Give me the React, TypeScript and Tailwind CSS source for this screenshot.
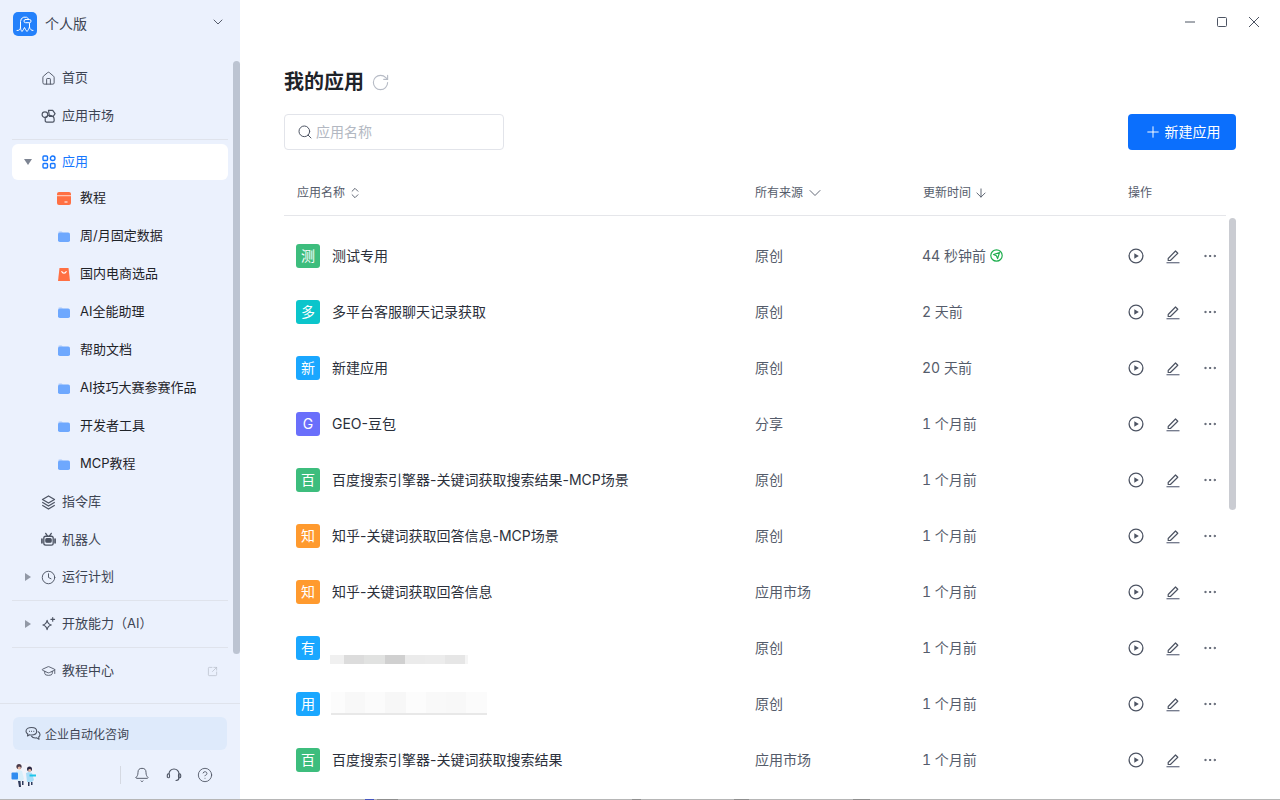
import type { ReactNode } from "react"
import {
  ArrowDown,
  Bell,
  ChevronDown,
  ChevronsUpDown,
  CircleHelp,
  Clock,
  Ellipsis,
  GraduationCap,
  House,
  Plus,
  RotateCw,
  Search,
  SquareArrowOutUpRight,
} from "lucide-react"

type Row = {
  badge: string
  color: string
  name?: string
  source: string
  time: string
  blur?: "a" | "b"
  live?: boolean
}

const ROWS: Row[] = [
  { badge: "测", color: "bg-[#3dbd7d]", name: "测试专用", source: "原创", time: "44 秒钟前", live: true },
  { badge: "多", color: "bg-[#0bc5cb]", name: "多平台客服聊天记录获取", source: "原创", time: "2 天前" },
  { badge: "新", color: "bg-[#1aa7ff]", name: "新建应用", source: "原创", time: "20 天前" },
  { badge: "G", color: "bg-[#6a6ffb]", name: "GEO-豆包", source: "分享", time: "1 个月前" },
  { badge: "百", color: "bg-[#3dbd7d]", name: "百度搜索引擎器-关键词获取搜索结果-MCP场景", source: "原创", time: "1 个月前" },
  { badge: "知", color: "bg-[#ff9a2e]", name: "知乎-关键词获取回答信息-MCP场景", source: "原创", time: "1 个月前" },
  { badge: "知", color: "bg-[#ff9a2e]", name: "知乎-关键词获取回答信息", source: "应用市场", time: "1 个月前" },
  { badge: "有", color: "bg-[#1aa7ff]", blur: "a", source: "原创", time: "1 个月前" },
  { badge: "用", color: "bg-[#1aa7ff]", blur: "b", source: "原创", time: "1 个月前" },
  { badge: "百", color: "bg-[#3dbd7d]", name: "百度搜索引擎器-关键词获取搜索结果", source: "应用市场", time: "1 个月前" },
]

const FOLDERS = ["周/月固定数据", "国内电商选品", "AI全能助理", "帮助文档", "AI技巧大赛参赛作品", "开发者工具", "MCP教程"]

function Logo() {
  return (
    <div className="flex h-6 w-6 items-center justify-center rounded-[5px] bg-[#2481fb]">
      <svg viewBox="0 0 24 24" className="h-6 w-6" fill="none" stroke="#fff" strokeWidth="1" strokeLinecap="round" strokeLinejoin="round">
        <path d="M7.500 15V9.500a4.500 4.500 0 0 1 8.300-2.400" />
        <path d="M16.500 11.500V15" />
        <rect x="11" y="7.500" width="7" height="3.200" rx="1.500" />
        <path d="M4 18.500c2 .3 3.500-1 3.500-3.500 0 2 .5 3.500 1.500 4.500 1-1 1.800-2.500 2.500-4 .6 1.500 1.400 3 2.500 4 1-1 1.700-2.500 2.500-4.500 .2 2 2 3.800 3.500 3.500" />
      </svg>
    </div>
  )
}

function MarketIcon() {
  return (
    <svg viewBox="0 0 16 16" className="h-[15px] w-[15px]" fill="none" stroke="#4d5463" strokeWidth="1.300" strokeLinejoin="round">
      <circle cx="4.200" cy="6" r="3" />
      <path d="M8 1.500h4.500L15 5l-2 3H9z" />
      <path d="M4.500 9.300c1.500-1.800 3-2.800 5-2.600 2.500.2 4.500 1.800 4.500 4.100v1.700c0 .8-.6 1.500-1.500 1.500H6c-1 0-1.500-.7-1.500-1.500z" />
    </svg>
  )
}

function AppsIcon() {
  return (
    <svg viewBox="0 0 14 14" className="h-[14px] w-[14px]" fill="none" stroke="#1677ff" strokeWidth="1.400">
      <rect x="1" y="1" width="4.500" height="4.500" rx="1" />
      <circle cx="10.700" cy="3.250" r="2.300" />
      <rect x="1" y="8.500" width="4.500" height="4.500" rx="1" />
      <rect x="8.500" y="8.500" width="4.500" height="4.500" rx="1" />
    </svg>
  )
}

function LayersIcon() {
  return (
    <svg viewBox="0 0 15 15" className="h-[15px] w-[15px]" fill="none" stroke="#4d5463" strokeWidth="1.300" strokeLinecap="round" strokeLinejoin="round">
      <path d="M7.500 1 13.500 4.500 7.500 8 1.500 4.500z" />
      <path d="M1.700 7.500 7.500 11l5.800-3.500" />
      <path d="M1.700 10.500 7.500 14l5.800-3.500" />
    </svg>
  )
}

function RobotIcon() {
  return (
    <svg viewBox="0 0 16 15" className="h-[15px] w-4" fill="none" stroke="#4d5463" strokeWidth="1.400" strokeLinecap="round">
      <path d="M5 1l2 3M11 1 9 4" />
      <rect x="3" y="4" width="10" height="9.500" rx="2" />
      <rect x="5.200" y="6.500" width="5.600" height="3.800" rx="1" fill="#4d5463" />
      <path d="M1 7v4M15 7v4" strokeWidth="1.800" />
    </svg>
  )
}

function SparkleIcon() {
  return (
    <svg viewBox="0 0 16 16" className="h-4 w-4" fill="none" stroke="#4d5463" strokeWidth="1.200" strokeLinejoin="round">
      <path d="M6.500 4c.5 3 1.500 4.300 4.500 5-3 .7-4 2-4.500 5-.5-3-1.500-4.300-4.500-5 3-.7 4-2 4.500-5z" />
      <path d="M12.500 1v4M10.500 3h4" strokeLinecap="round" />
    </svg>
  )
}

function ChatIcon() {
  return (
    <svg viewBox="0 0 16 16" className="h-4 w-4" fill="none" stroke="#4d5463" strokeWidth="1.100" strokeLinejoin="round">
      <path d="M6.500 1.500c3 0 5.200 1.500 5.200 3.800S9.500 9 6.500 9c-.7 0-1.400 0-2-.2L2.500 10l.3-2C1.800 7.300 1 6.400 1 5.300 1 3 3.500 1.500 6.500 1.500z" />
      <path d="M12.800 5.500c1.300.6 2.200 1.700 2.200 3 0 1-.5 1.900-1.300 2.500l.3 2.200-2.200-1.300c-2.200.4-4.500-.3-5.500-2" />
      <path d="M4 5.300h.8M6.200 5.300H7M8.400 5.300h.8" strokeWidth="1.200" />
    </svg>
  )
}

function FolderIcon() {
  return (
    <svg viewBox="0 0 12 11" className="h-[11px] w-3">
      <path d="M0 2a2 2 0 0 1 2-2h1.500l1.500 2H0z" fill="#c9dcfd" />
      <rect x="0" y="1.500" width="12" height="9.500" rx="1.800" fill="#6ea8fe" />
    </svg>
  )
}

function CardIcon() {
  return (
    <svg viewBox="0 0 14 13" className="h-[13px] w-[14px]">
      <rect width="14" height="13" rx="2" fill="#ff7043" />
      <rect y="3.200" width="14" height="1" fill="#ffd9cc" />
      <rect x="7.500" y="9.500" width="3" height="1" fill="#fff" />
    </svg>
  )
}

function BagIcon() {
  return (
    <svg viewBox="0 0 12 13" className="h-[13px] w-3">
      <path d="M1.500 0h9L12 13H0z" fill="#ff7043" />
      <path d="M3.800 3.500a2.300 2.300 0 0 0 4.400 0" fill="none" stroke="#fff" strokeWidth="1.100" strokeLinecap="round" />
    </svg>
  )
}

function Avatar() {
  return (
    <svg viewBox="0 0 26 26" className="h-[26px] w-[26px]">
      <circle cx="13" cy="13" r="12.500" fill="#f1f3fb" />
      <path d="M5 9l3-1 3 1 2 8-2 2H6z" fill="#d8eefa" />
      <path d="M15 11l3-1 3 1 2 7-2 2h-5z" fill="#a9dcf7" />
      <circle cx="8" cy="4.500" r="2.600" fill="#4a3a4a" />
      <circle cx="8.300" cy="6" r="1.600" fill="#e9b9a4" />
      <circle cx="18.500" cy="7" r="2.500" fill="#2d2a45" />
      <circle cx="18.700" cy="8.500" r="1.400" fill="#e9b9a4" />
      <rect x="0.500" y="10.500" width="6.500" height="7" rx="1" fill="#2f8cf0" />
      <rect x="18.500" y="12.500" width="6.500" height="2" fill="#1fc5ea" />
      <path d="M7 19h2.500l.5 6H8zM11 19h1.500v4H11zM17 20h1.500v4H17zM20 20h1.500v3H20z" fill="#2f3a5c" />
    </svg>
  )
}

function PlayIcon() {
  return (
    <svg viewBox="0 0 16 16" className="h-4 w-4" fill="none" stroke="#4d5463" strokeWidth="1.300">
      <circle cx="8" cy="8" r="6.900" />
      <path d="M6.300 5.200v5.600L10.800 8z" fill="#4d5463" stroke="none" />
    </svg>
  )
}

function EditIcon() {
  return (
    <svg viewBox="0 0 16 16" className="h-4 w-4" fill="none" stroke="#4d5463" strokeWidth="1.200" strokeLinejoin="round">
      <path d="M3.200 10.500 10.500 3l2.300 2.200-7.400 7.300H3.200z" />
      <path d="M1.500 14.700h13" strokeWidth="1.300" stroke="#70768a" />
    </svg>
  )
}

function LiveBadge() {
  return (
    <svg viewBox="0 0 13 13" className="h-[13px] w-[13px]" fill="none" stroke="#1fae4f" strokeWidth="1.200" strokeLinejoin="round">
      <circle cx="6.500" cy="6.500" r="5.700" />
      <path d="M3.500 5.500 9.500 3.600 7.600 9.600 6.400 6.700z" />
    </svg>
  )
}

function WindowControls() {
  return (
    <div className="flex h-11 items-center justify-end gap-5 pr-5">
      <svg viewBox="0 0 12 12" className="h-3 w-3" stroke="#4d5463" strokeWidth="1">
        <path d="M1 6h10" />
      </svg>
      <svg viewBox="0 0 12 12" className="h-3 w-3" fill="none" stroke="#4d5463" strokeWidth="1">
        <rect x="1.500" y="1.500" width="9" height="9" rx="1" />
      </svg>
      <svg viewBox="0 0 12 12" className="h-3 w-3" stroke="#4d5463" strokeWidth="1">
        <path d="M1 1l10 10M11 1 1 11" />
      </svg>
    </div>
  )
}

function Caret({ open }: { open?: boolean }) {
  return (
    <span
      className={
        open
          ? "h-0 w-0 border-x-[4px] border-t-[6px] border-x-transparent border-t-[#7d8492]"
          : "h-0 w-0 border-y-[4px] border-l-[6px] border-y-transparent border-l-[#9299a6]"
      }
    />
  )
}

function NavItem({
  icon,
  label,
  caret,
  trailing,
  className = "h-[38px]",
}: {
  icon: ReactNode
  label: string
  caret?: boolean
  trailing?: ReactNode
  className?: string
}) {
  return (
    <div className={`flex items-center pl-[10px] pr-[10px] text-[13px] text-[#3d4453] ${className}`}>
      <span className="flex w-3 justify-center">{caret ? <Caret /> : null}</span>
      <span className="ml-[7px] flex w-[15px] justify-center">{icon}</span>
      <span className="ml-[6px] flex-1">{label}</span>
      {trailing}
    </div>
  )
}

function SubItem({ icon, label }: { icon: ReactNode; label: string }) {
  return (
    <div className="flex h-[38px] items-center text-[13px] text-[#1f2329]">
      <span className="ml-[45px] flex w-[14px] justify-center">{icon}</span>
      <span className="ml-[9px]">{label}</span>
    </div>
  )
}

function Sidebar() {
  const navIcon = "h-[15px] w-[15px] text-[#4d5463]"
  return (
    <aside className="relative flex h-full w-[240px] shrink-0 flex-col bg-[#ebf1fd]">
      <div className="flex h-[48px] items-center pl-[13px] pr-[14px]">
        <Logo />
        <span className="ml-2 flex-1 pb-[2px] text-[14px] text-[#3d4453]">个人版</span>
        <ChevronDown className="mb-1 h-[16px] w-[16px] text-[#4a5160]" strokeWidth={1.4} />
      </div>

      <nav className="min-h-0 flex-1 px-3 pt-[11px]">
        <NavItem icon={<House className={navIcon} strokeWidth={1.5} />} label="首页" />
        <NavItem icon={<MarketIcon />} label="应用市场" />
        <div className="mt-1 h-px bg-[#dfe3ec]" />
        <div className="mt-1 flex h-9 items-center rounded-[6px] bg-white pl-[10px] text-[13px] text-[#1677ff]">
          <span className="flex w-3 justify-center">
            <Caret open />
          </span>
          <span className="ml-[7px] flex w-[15px] justify-center">
            <AppsIcon />
          </span>
          <span className="ml-[6px]">应用</span>
        </div>
        <div className="-mt-px">
          <SubItem icon={<CardIcon />} label="教程" />
          {FOLDERS.map((label) => (
            <SubItem key={label} label={label} icon={label === "国内电商选品" ? <BagIcon /> : <FolderIcon />} />
          ))}
        </div>
        <NavItem icon={<LayersIcon />} label="指令库" />
        <NavItem icon={<RobotIcon />} label="机器人" className="h-[37px]" />
        <NavItem icon={<Clock className={navIcon} strokeWidth={1.5} />} label="运行计划" caret />
        <div className="mt-1 h-px bg-[#dfe3ec]" />
        <div className="mt-1">
          <NavItem icon={<SparkleIcon />} label="开放能力（AI）" caret />
        </div>
        <div className="mt-1 h-px bg-[#dfe3ec]" />
        <div className="mt-1">
          <NavItem
            icon={<GraduationCap className="h-4 w-4 text-[#4d5463]" strokeWidth={1.4} />}
            label="教程中心"
            trailing={<SquareArrowOutUpRight className="h-[11px] w-[11px] text-[#b4bac6]" strokeWidth={1.5} />}
          />
        </div>
      </nav>

      <div className="flex h-[97px] flex-col border-t border-[#dfe3ec] px-[13px] pt-[13px]">
        <div className="flex h-[33px] items-center rounded-[6px] bg-[#deeafb] pl-3 text-[12px] text-[#3d4453]">
          <ChatIcon />
          <span className="ml-1 pt-[2px]">企业自动化咨询</span>
        </div>
        <div className="mt-[12px] flex items-center">
          <span className="-ml-[2px] flex">
            <Avatar />
          </span>
          <span className="ml-[83px] h-[18px] w-px bg-[#d5d9e2]" />
          <Bell className="ml-[13px] h-4 w-4 text-[#4d5463]" strokeWidth={1.4} />
          <svg viewBox="0 0 16 16" className="ml-[16px] h-[16px] w-[16px]" fill="none" stroke="#4d5463" strokeWidth="1.100" strokeLinecap="round">
            <path d="M3 7a5 5 0 0 1 10 0v3.500a3 3 0 0 1-3 3" />
            <rect x="1.300" y="6.800" width="2.200" height="4" rx="1.100" />
            <rect x="12.500" y="6.800" width="2.200" height="4" rx="1.100" />
          </svg>
          <CircleHelp className="ml-[15px] h-4 w-4 text-[#4d5463]" strokeWidth={1.3} />
        </div>
      </div>

      <div className="absolute right-0 top-[61px] h-[593px] w-[7px] rounded-[4px] bg-[#bcc4d2]" />
    </aside>
  )
}

function BlurName({ kind }: { kind: "a" | "b" }) {
  if (kind === "a") {
    return (
      <div className="ml-[-2px] flex h-6 w-[138px] flex-col justify-end">
        <div className="flex h-[9px] translate-y-[5px]">
          <span className="w-[14px] bg-[#f0f0f0]" />
          <span className="w-[20px] bg-[#dcdcdc]" />
          <span className="w-[21px] bg-[#e1e2e1]" />
          <span className="w-[20px] bg-[#d0d0d0]" />
          <span className="w-[20px] bg-[#ebebeb]" />
          <span className="w-[20px] bg-[#ececec]" />
          <span className="w-[20px] bg-[#e6e6e6]" />
          <span className="w-[3px] bg-[#f5f5f5]" />
        </div>
      </div>
    )
  }
  return (
    <div className="ml-[-1px] flex h-[23px] w-[156px] flex-col">
      <div className="flex flex-1">
        <span className="w-[14px] bg-[#fcfcfc]" />
        <span className="w-[20px] bg-[#f8f8f8]" />
        <span className="w-[20px] bg-[#fbfbfb]" />
        <span className="w-[21px] bg-[#f7f7f7]" />
        <span className="w-[20px] bg-[#fcfcfc]" />
        <span className="w-[20px] bg-[#f9f9f9]" />
        <span className="w-[20px] bg-[#f8f8f8]" />
        <span className="w-[21px] bg-[#fbfbfb]" />
      </div>
      <div className="h-[2px] bg-[#e8e8e8]" />
    </div>
  )
}

function AppRow({ row }: { row: Row }) {
  return (
    <div className="grid h-14 grid-cols-[471px_167px_206px_1fr] items-center text-[14px]">
      <div className="flex items-center pl-3">
        <span className={`flex h-6 w-6 items-center justify-center rounded-[3px] pb-[2px] text-white ${row.color}`}>{row.badge}</span>
        <div className="ml-3 flex h-6 items-center pb-[2px] text-[#2b303b]">
          {row.blur ? <BlurName kind={row.blur} /> : row.name}
        </div>
      </div>
      <div className="pb-px text-[#555c6b]">{row.source}</div>
      <div className="flex items-center pb-px text-[#555c6b] tabular-nums">
        <span>{row.time}</span>
        {row.live ? (
          <span className="ml-1 flex">
            <LiveBadge />
          </span>
        ) : null}
      </div>
      <div className="flex items-center gap-[21px]">
        <PlayIcon />
        <EditIcon />
        <Ellipsis className="h-4 w-4 text-[#4d5463]" strokeWidth={1.5} />
      </div>
    </div>
  )
}

export default function App() {
  return (
    <div className="relative flex h-[800px] w-[1280px] overflow-hidden bg-white [font-family:Inter,'Noto_Sans_CJK_SC',sans-serif]">
      <Sidebar />

      <main className="relative flex h-full min-w-0 flex-1 flex-col">
        <WindowControls />

        <div className="flex min-h-0 flex-1 flex-col px-11">
          <div className="mt-[24px] flex h-7 items-center">
            <h1 className="text-[20px] font-bold text-[#1f2329]">我的应用</h1>
            <RotateCw className="ml-[7px] h-[19px] w-[19px] text-[#b6bbc5]" strokeWidth={1.4} />
          </div>

          <div className="mt-[18px] flex items-center justify-between">
            <div className="flex h-9 w-[220px] items-center rounded-[4px] border border-[#e2e4ea] pl-3 text-[14px] text-[#b3b8c2]">
              <Search className="h-4 w-4 text-[#4d5463]" strokeWidth={1.5} />
              <span className="ml-[3px] pb-[2px]">应用名称</span>
            </div>
            <button
              type="button"
              className="flex h-9 w-[108px] items-center justify-center rounded-[4px] bg-[#0b6ffd] text-[14px] text-white"
            >
              <Plus className="h-[18px] w-[18px]" strokeWidth={1.3} />
              <span className="ml-[3px] pb-px">新建应用</span>
            </button>
          </div>

          <div className="mr-[10px] mt-[19px] grid h-[47px] grid-cols-[471px_167px_206px_1fr] items-center border-b border-[#e5e6ea] pt-[2px] text-[12px] text-[#555c6b]">
            <div className="flex items-center pl-[13px]">
              应用名称
              <ChevronsUpDown className="ml-[3px] h-[14px] w-[14px]" strokeWidth={1.6} />
            </div>
            <div className="flex items-center">
              所有来源
              <ChevronDown className="ml-[2px] h-5 w-5" strokeWidth={1.1} />
            </div>
            <div className="flex items-center pl-px">
              更新时间
              <ArrowDown className="ml-[3px] h-[14px] w-[14px]" strokeWidth={1.6} />
            </div>
            <div>操作</div>
          </div>

          <div className="mt-3">
            {ROWS.map((row) => (
              <AppRow key={row.badge + row.time + (row.name ?? row.blur)} row={row} />
            ))}
          </div>
        </div>

        <div className="absolute right-[44px] top-[218px] h-[292px] w-[7px] rounded-[4px] bg-[#caccd2]" />
      </main>

      <div className="absolute bottom-0 left-0 flex h-px w-full bg-[#b6b6b6]">
        <span className="ml-[365px] w-[9px] bg-[#4455c0]" />
        <span className="ml-[3px] w-[21px] bg-[#8f8f8f]" />
        <span className="ml-[234px] w-[9px] bg-[#8f8f8f]" />
        <span className="ml-[93px] w-[15px] bg-[#8f8f8f]" />
        <span className="ml-[104px] w-[17px] bg-[#8f8f8f]" />
      </div>
    </div>
  )
}
